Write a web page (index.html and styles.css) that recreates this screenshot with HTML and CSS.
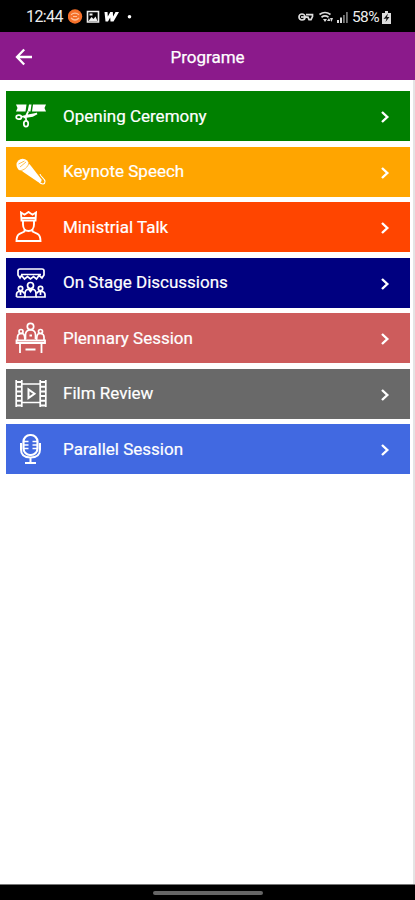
FILE: index.html
```html
<!DOCTYPE html>
<html lang="en">
<head>
<meta charset="utf-8">
<title>Programe</title>
<link rel="stylesheet" href="styles.css">
</head>
<body>
<div class="screen">
  <div class="status">
    <span class="clock">12:44</span>
    <svg class="notes" width="66" height="16" viewBox="0 0 66 16">
      <circle cx="7" cy="7.500" r="7.200" fill="#f5702a"/>
      <path d="M3 5.700q4-3 8 0M3 9q4 4 8 0M5 7.500h4" fill="none" stroke="#ffc09a" stroke-width="1.200"/>
      <path d="M19.500 2.500h11v10.500h-11z" fill="none" stroke="#eee" stroke-width="1.600"/>
      <path d="M20.500 12l3-4 2 2 2-2.500 2 4.500z" fill="#eee"/><path d="M21.500 4.500h3v2h-3z" fill="#eee"/>
      <path d="M36.500 3h3l.3 4.500L42.300 3h2.500l.3 4.500L47.500 3H51l-5.500 9.500h-3l-.3-4-2.200 4h-2.500z" fill="#fff"/>
      <circle cx="61.500" cy="7.700" r="1.800" fill="#fff"/>
    </svg>
    <svg class="signals" width="50" height="16" viewBox="0 0 50 16">
      <g fill="none" stroke="#ddd" stroke-width="1.700">
        <circle cx="4" cy="8" r="3"/><path d="M3 8h5.500"/><path d="M8 5.600h6.500v2l-1.500 3h-2l-1-2.500H7.500"/>
        <path d="M21.500 5.500q5.500-4 11 0M23.500 8.200q3.500-2.500 7 0"/>
      </g>
      <path d="M25 10h4l-2 3zM29 12l2-3 1.500 3zM32 9h3l-1.500 4z" fill="#ddd"/>
      <path d="M39 11h2v3h-2zM42 8.500h2V14h-2z" fill="#ddd"/><path d="M45 6h1.800v8H45zM48 3h1.800v11H48z" fill="#777"/>
    </svg>
    <span class="percent">58%</span>
    <svg class="battery" width="9" height="13" viewBox="0 0 9 13">
      <path d="M3 0h3v2h3v11H0V2h3z" fill="#ddd"/><path d="M1.500 8L6 2.500 5 6h2.500L3.500 11l1-3.500z" fill="#111"/>
    </svg>
  </div>
  <header class="header">
    <svg class="back" width="18" height="18" viewBox="0 0 18 18"><path d="M9.200 1.500L2 9l7.200 7.500M2 9h15" fill="none" stroke="#fff" stroke-width="2.300"/></svg>
    <h1 class="title">Programe</h1>
  </header>
  <main class="list">
    <div class="row green">
      <svg class="icon" viewBox="0 0 32 32">
        <path class="solid" d="M1 4.500h10.500l-1 7H1l1.500-3.500zM14 4.500l-1.500 7h3l1-7zM18 4.500h13l-1.500 3.500 1.500 3.500H17z"/>
        <g stroke-width="1.700"><ellipse cx="3.800" cy="17.200" rx="2.600" ry="2"/><ellipse cx="11" cy="23.800" rx="2.200" ry="2.900"/><path d="M6 17l6-1.500 10-2-4.500 2.500-9 1.300M11.200 20.500l-.5-4 2.500-5"/></g>
      </svg>
      <span class="label">Opening Ceremony</span>
      <svg class="chevron" viewBox="0 0 10 14"><path d="M2 2l5.300 5L2 12"/></svg>
    </div>
    <div class="row orange">
      <svg class="icon" viewBox="0 0 32 32">
        <circle class="solid" cx="7.700" cy="9" r="6.200"/>
        <path class="solid" d="M14.500 8l12 15.500c.5 2.500-1.500 3.500-3.500 2.500L7.500 15.500z"/>
        <path class="cut" d="M4.500 14.800c4.500-.5 8.500-3.500 9.500-8.300M3.500 8l6-3M5 11l6-5"/>
        <path d="M24 26c3 3 6 2.300 6-.500 0-3-4.500-4.500-5-7.500" stroke-width="1.100"/>
      </svg>
      <span class="label">Keynote Speech</span>
      <svg class="chevron" viewBox="0 0 10 14"><path d="M2 2l5.300 5L2 12"/></svg>
    </div>
    <div class="row red">
      <svg class="icon" viewBox="0 0 32 32"><g stroke-width="1.900">
        <path d="M6.500 9.500L6 1.500l3.500 2.200 4-2.700 4 2.700L21 1.500l-.5 8zM7 7h13"/>
        <path d="M8 9.500v4c0 4 2.500 6.500 5.500 6.500s5.500-2.500 5.500-6.500v-4"/>
        <path d="M9.500 18.500v2l-5 2.300C2.500 23.800 1.500 26 1.500 30h24c0-4-1-6.200-3-7.200l-5-2.300v-2"/>
      </g></svg>
      <span class="label">Ministrial Talk</span>
      <svg class="chevron" viewBox="0 0 10 14"><path d="M2 2l5.300 5L2 12"/></svg>
    </div>
    <div class="row navy">
      <svg class="icon" viewBox="0 0 32 32"><g stroke-width="1.700">
        <path d="M5 2h22q2 0 2 2v4l-2 3-3-2.500-2.500 3.500-3-2.500-3 2.500-3-2.500-3 2.500L6.500 8.500 5 11 3 8V4q0-2 2-2zM6 7.500h20"/>
        <circle cx="15.500" cy="18.500" r="3"/><path d="M10 30v-3.500q0-4 4-4.500h3q4 .5 4 4.500V30zM14 22.500l1.500 2 1.500-2"/>
        <circle cx="5.500" cy="21.500" r="2.200"/><path d="M1.500 30v-2.500q0-3 3-3h2q2 0 3 2M1.500 30h9M5.500 25v3"/>
        <circle cx="25.500" cy="21.500" r="2.200"/><path d="M21.500 26.500q1-2 3-2h2q3.500 0 3.500 3V30h-9M25.500 25v3"/>
      </g></svg>
      <span class="label">On Stage Discussions</span>
      <svg class="chevron" viewBox="0 0 10 14"><path d="M2 2l5.300 5L2 12"/></svg>
    </div>
    <div class="row rose">
      <svg class="icon" viewBox="0 0 32 32"><g stroke-width="1.700">
        <circle cx="15.500" cy="4.500" r="3.200"/><path d="M10.500 17v-4q0-4.500 4-5h2q4 .5 4 5v4"/>
        <circle cx="6" cy="9.500" r="2"/><path d="M2.500 18v-3q0-3 3-3.500h1.500q2 0 2.500 2.500l.5 4"/>
        <circle cx="25.500" cy="9.500" r="2"/><path d="M21.500 18l.5-4q.5-2.500 2.500-2.500H26q3 .5 3 3.500v3"/>
        <path d="M1.500 18.500h28.500v2.500H1.500zM5 21v10M26.500 21v10M10.500 27.500h10M14.500 13.500h2.500" stroke-width="1.800"/>
      </g></svg>
      <span class="label">Plennary Session</span>
      <svg class="chevron" viewBox="0 0 10 14"><path d="M2 2l5.300 5L2 12"/></svg>
    </div>
    <div class="row gray">
      <svg class="icon" viewBox="0 0 32 32">
        <path d="M1.200 2v27M6.800 2v27M25.200 2v27M30.800 2v27M7 6h18M7 24.500h18" stroke-width="1.700"/>
        <path d="M1 4h6M1 8.700h6M1 13.400h6M1 18.100h6M1 22.800h6M1 27.500h6M25 4h6M25 8.700h6M25 13.400h6M25 18.100h6M25 22.800h6M25 27.500h6" stroke-width="2"/>
        <path d="M13.500 11.500v8.500l6-4.250z" stroke-width="2"/>
      </svg>
      <span class="label">Film Review</span>
      <svg class="chevron" viewBox="0 0 10 14"><path d="M2 2l5.300 5L2 12"/></svg>
    </div>
    <div class="row blue">
      <svg class="icon" viewBox="0 0 32 32">
        <rect x="8.500" y="2" width="14" height="20" rx="6.500" stroke-width="2.200"/>
        <path d="M9 8.500h4.500M9 12h4.500M9 15.500h4.500M22 8.500h-4.500M22 12h-4.500M22 15.500h-4.500" stroke-width="1.700"/>
        <path d="M6 10v6.500q0 8 9.500 8t9.500-8V10M15.500 24.500V30M10 30h11" stroke-width="2"/>
      </svg>
      <span class="label">Parallel Session</span>
      <svg class="chevron" viewBox="0 0 10 14"><path d="M2 2l5.300 5L2 12"/></svg>
    </div>
  </main>
  <footer class="nav"><div class="handle"></div></footer>
</div>
</body>
</html>
```
FILE: styles.css
```css
* { box-sizing: border-box; }
body { margin: 0; font-family: Roboto, sans-serif; color: #fff; background: #fff; }
.screen { height: 900px; display: flex; flex-direction: column; }
.status { height: 32px; flex: none; background: #000; display: flex; align-items: center; padding: 2px 24px 0 26px; }
.clock, .percent { font-size: 16px; line-height: 20px; color: #eee; white-space: nowrap; letter-spacing: -0.6px; }
.clock { width: 42px; }
.signals { margin-left: auto; margin-right: 4px; }
.percent { width: 29px; font-size: 15.5px; }
.battery { margin-left: 1px; }
.header { height: 48px; flex: none; background: #8b1a8b; display: grid; grid-template-columns: 44px 1fr 44px; align-items: center; }
.back { margin-left: 15px; margin-top: 1px; }
.title { margin: 0; padding-top: 2px; font-size: 17px; font-weight: 400; text-align: center; line-height: 24px; -webkit-text-stroke: 0.25px #fff; }
.list { flex: 1; padding: 11px 3px 0 6px; display: flex; flex-direction: column; gap: 5.5px; border-right: 2px solid #e4e4e4; }
.row { height: 50px; display: flex; align-items: center; padding: 0 20px 0 9px; }
.icon { width: 32px; height: 32px; flex: none; fill: none; stroke: #fff; }
.icon .solid { fill: #fff; stroke: none; }
.icon .cut { stroke: #ffa500; stroke-width: 0.7; }
.label { margin-left: 16px; flex: 1; font-size: 17px; line-height: 24px; padding-bottom: 1px; white-space: nowrap; -webkit-text-stroke: 0.2px #fff; }
.chevron { width: 10px; height: 14px; margin-top: 2px; fill: none; stroke: #fff; stroke-width: 2.4; }
.green { background: #008000; }
.orange { background: #ffa500; }
.red { background: #ff4500; }
.navy { background: #000080; }
.rose { background: #cd5c5c; }
.gray { background: #696969; }
.blue { background: #4169e1; }
.nav { height: 16px; flex: none; background: #000; border-top: 1px solid #777; display: flex; justify-content: center; align-items: center; }
.handle { width: 110px; height: 4px; border-radius: 2px; background: #666; }
```
